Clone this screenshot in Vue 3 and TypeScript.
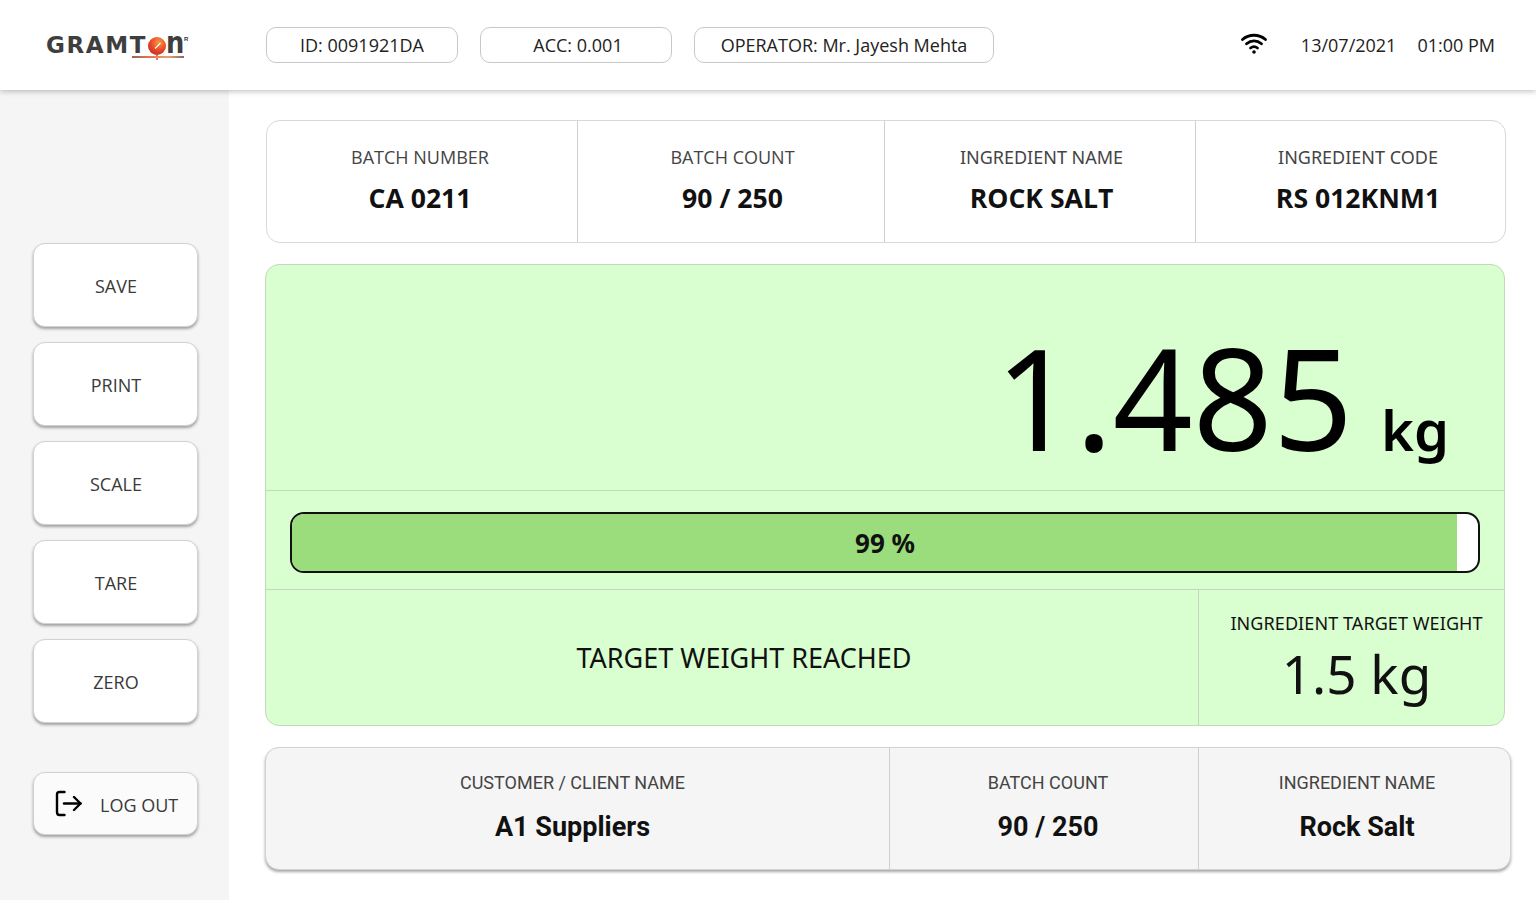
<script setup lang="ts">
const chips: { text: string; cls: string }[] = [
  { text: 'ID: 0091921DA', cls: 'w192' },
  { text: 'ACC: 0.001', cls: 'w192 acc' },
  { text: 'OPERATOR: Mr. Jayesh Mehta', cls: 'w300' },
]
const actions: string[] = ['SAVE', 'PRINT', 'SCALE', 'TARE', 'ZERO']
const topCells: { label: string; value: string; cls: string }[] = [
  { label: 'BATCH NUMBER', value: 'CA 0211', cls: 't1' },
  { label: 'BATCH COUNT', value: '90 / 250', cls: 't2' },
  { label: 'INGREDIENT NAME', value: 'ROCK SALT', cls: 't3' },
  { label: 'INGREDIENT CODE', value: 'RS 012KNM1', cls: 't4' },
]
const bottomCells: { label: string; value: string; cls: string }[] = [
  { label: 'CUSTOMER / CLIENT NAME', value: 'A1 Suppliers', cls: 'b1' },
  { label: 'BATCH COUNT', value: '90 / 250', cls: 'b2' },
  { label: 'INGREDIENT NAME', value: 'Rock Salt', cls: 'b3' },
]
const progress = 98.2
</script>

<template>
  <div class="page">
    <header class="topbar">
      <div class="logo">
        <span class="logo-text">GRAMT</span>
        <svg class="logo-ball" width="18" height="24" viewBox="0 0 18 24">
          <defs>
            <radialGradient id="ball" cx="0.6" cy="0.3" r="0.8">
              <stop offset="0" stop-color="#f79a3e" />
              <stop offset="0.55" stop-color="#e8482a" />
              <stop offset="1" stop-color="#c4261c" />
            </radialGradient>
          </defs>
          <circle cx="9" cy="9" r="9" fill="url(#ball)" />
          <path d="M7 11.5 L12.5 6" stroke="#fff" stroke-width="1.1" />
          <path d="M9 18 V23" stroke="#d9553a" stroke-width="1.6" />
        </svg>
        <span class="logo-n">n</span>
        <span class="logo-r">R</span>
        <span class="logo-line"></span>
      </div>
      <div class="chips">
        <div v-for="c in chips" :key="c.text" class="chip" :class="c.cls">{{ c.text }}</div>
      </div>
      <div class="status">
        <svg class="wifi" width="28" height="22" viewBox="0 0 28 22" fill="none" stroke="#000" stroke-width="2.8" stroke-linecap="round">
          <path d="M2.5 6.5 C9 0.8 19 0.8 25.5 6.5" />
          <path d="M6.5 10.8 C11 7 17 7 21.5 10.8" />
          <path d="M10.5 15 C12.8 13.2 15.2 13.2 17.5 15" />
          <circle cx="14" cy="19" r="1.8" fill="#000" stroke="none" />
        </svg>
        <span class="date">13/07/2021</span>
        <span class="time">01:00 PM</span>
      </div>
    </header>

    <div class="body">
      <aside class="sidebar">
        <div class="actions">
          <button v-for="a in actions" :key="a" class="action" type="button">{{ a }}</button>
        </div>
        <button class="logout" type="button">
          <svg width="27" height="27" viewBox="0 0 27 27" fill="none" stroke="#000" stroke-width="2.4" stroke-linecap="round" stroke-linejoin="round">
            <path d="M9.5 2 H4.5 Q2 2 2 4.5 V22 Q2 25 4.5 25 H9.5" />
            <path d="M9 13.5 H25.5" />
            <path d="M19 7 L25.5 13.5 L19 20" />
          </svg>
          <span>LOG OUT</span>
        </button>
      </aside>

      <main class="main">
        <section class="info">
          <div v-for="c in topCells" :key="c.label" class="info-cell" :class="c.cls">
            <div class="info-label">{{ c.label }}</div>
            <div class="info-value">{{ c.value }}</div>
          </div>
        </section>

        <section class="scale">
          <div class="reading">
            <span class="reading-num">1.485</span>
            <span class="reading-unit">kg</span>
          </div>
          <div class="progress-row">
            <div class="progress">
              <div class="progress-fill" :style="{ width: progress + '%' }"></div>
              <div class="progress-text">99 %</div>
            </div>
          </div>
          <div class="target-row">
            <div class="target-msg">TARGET WEIGHT REACHED</div>
            <div class="target-box">
              <div class="target-label">INGREDIENT TARGET WEIGHT</div>
              <div class="target-value">1.5 kg</div>
            </div>
          </div>
        </section>

        <section class="summary">
          <div v-for="c in bottomCells" :key="c.cls" class="sum-cell" :class="c.cls">
            <div class="sum-label">{{ c.label }}</div>
            <div class="sum-value">{{ c.value }}</div>
          </div>
        </section>
      </main>
    </div>
  </div>
</template>

<style>
html, body { margin: 0; background: #fff; }
</style>

<style scoped>
.page {
  width: 1536px;
  height: 900px;
  display: flex;
  flex-direction: column;
  overflow: hidden;
  font-family: "Open Sans", "Noto Sans", sans-serif;
  color: #333;
}
.topbar {
  height: 90px;
  flex: none;
  background: #fff;
  display: flex;
  align-items: center;
  box-shadow: 0 1px 6px rgba(0, 0, 0, 0.28);
  position: relative;
  z-index: 2;
}
.logo {
  width: 266px;
  flex: none;
  padding-left: 46px;
  box-sizing: border-box;
  display: flex;
  align-items: center;
  position: relative;
  height: 40px;
}
.logo-text {
  font-family: "DejaVu Sans", sans-serif;
  font-weight: 700;
  font-size: 23px;
  letter-spacing: 1.6px;
  color: #3e3e3e;
  line-height: 1;
  width: 102px;
  white-space: nowrap;
}
.logo-ball { margin-top: 7px; flex: none; }
.logo-n {
  font-family: "DejaVu Sans", sans-serif;
  font-weight: 700;
  font-size: 23px;
  color: #3e3e3e;
  line-height: 1;
  display: inline-block;
  transform: scale(1.12, 1.32);
  transform-origin: 0 75%;
  margin-top: -2px;
}
.logo-r {
  position: absolute;
  left: 184px;
  top: 11px;
  font-size: 6px;
  line-height: 7px;
  font-weight: 700;
  font-family: "Liberation Sans", sans-serif;
  color: #333;
}
.logo-line {
  position: absolute;
  left: 132px;
  top: 31px;
  width: 52px;
  height: 2px;
  background: linear-gradient(90deg, #8a6a60, #e8704a 30%, #e8a070 70%, #8a6a60);
}
.chips { display: flex; gap: 22px; flex: 1; }
.chip {
  height: 36px;
  box-sizing: border-box;
  border: 1px solid #c8c8c8;
  border-radius: 10px;
  display: flex;
  align-items: center;
  justify-content: center;
  font-size: 18px;
  color: #222;
}
.w192 { width: 192px; }
.w300 { width: 300px; }
.acc { padding-left: 4px; }
.status {
  display: flex;
  align-items: center;
  padding-right: 41px;
  font-size: 18px;
  color: #222;
}
.wifi { margin-right: 33px; margin-top: -2px; }
.date { margin-right: 21px; }
.body { flex: 1; display: flex; min-height: 0; }
.sidebar {
  width: 229px;
  flex: none;
  background: #f5f5f5;
  box-sizing: border-box;
  padding: 153px 31px 0 33px;
  display: flex;
  flex-direction: column;
}
.actions { display: flex; flex-direction: column; gap: 15px; }
.action, .logout {
  font-family: inherit;
  font-size: 18px;
  color: #3a3a3a;
  border: 1px solid #d2d2d2;
  border-radius: 12px;
  box-shadow: 0 2px 3px rgba(0, 0, 0, 0.35);
  padding: 0;
}
.action {
  width: 165px;
  height: 84px;
  background: #fff;
  padding: 2px 0 0 1px;
}
.logout {
  margin-top: 49px;
  width: 165px;
  height: 63px;
  background: #fbfbfb;
  display: flex;
  align-items: center;
  padding-left: 21px;
  box-sizing: border-box;
}
.logout span { margin: 2px 0 0 18px; }
.main {
  flex: 1;
  min-width: 0;
  padding: 30px 25px 0 36px;
  display: flex;
  flex-direction: column;
}
.info {
  width: 1240px;
  margin-left: 1px;
  height: 123px;
  box-sizing: border-box;
  border: 1px solid #d8d8d8;
  border-radius: 14px;
  display: flex;
  flex: none;
}
.info-cell {
  box-sizing: border-box;
  text-align: center;
  border-right: 1px solid #cfcfcf;
  padding-top: 24px;
}
.info-cell:last-child { border-right: 0; }
.t1 { width: 311px; padding-right: 4px; }
.t2 { width: 307px; padding-left: 3px; }
.t3 { width: 311px; padding-left: 3px; }
.t4 { flex: 1; padding-left: 15px; }
.info-label { font-size: 18px; line-height: 25px; color: #444; }
.t3 .info-label, .t4 .info-label { font-family: "Noto Sans", sans-serif; }
.info-value {
  font-size: 26.6px;
  font-weight: 700;
  line-height: 36px;
  margin-top: 10px;
  color: #111;
}
.scale {
  margin-top: 21px;
  width: 1240px;
  height: 462px;
  box-sizing: border-box;
  background: #d9fed0;
  border: 1px solid #c4d8bd;
  border-radius: 14px;
  display: flex;
  flex-direction: column;
  flex: none;
  font-family: "Noto Sans", sans-serif;
}
.reading {
  height: 226px;
  box-sizing: border-box;
  border-bottom: 1px solid #c4d8bd;
  display: flex;
  align-items: baseline;
  justify-content: flex-end;
  padding-right: 55px;
  color: #000;
  line-height: 1;
  padding-top: 57px;
}
.reading-num { font-size: 140px; line-height: 150px; }
.reading-unit {
  font-size: 56px;
  font-weight: 600;
  margin-left: 28px;
}
.progress-row {
  height: 99px;
  box-sizing: border-box;
  border-bottom: 1px solid #c4d8bd;
  padding: 21px 24px 0 24px;
}
.progress {
  position: relative;
  height: 61px;
  box-sizing: border-box;
  border: 2px solid #111;
  border-radius: 14px;
  background: #fff;
  overflow: hidden;
}
.progress-fill { height: 100%; background: #9bdc7c; }
.progress-text {
  position: absolute;
  left: 0;
  right: 0;
  top: 0;
  bottom: 0;
  display: flex;
  align-items: center;
  justify-content: center;
  font-size: 26px;
  font-weight: 700;
  color: #111;
}
.target-row { flex: 1; display: flex; min-height: 0; }
.target-msg {
  width: 933px;
  flex: none;
  box-sizing: border-box;
  border-right: 1px solid #c4d8bd;
  text-align: center;
  font-size: 27px;
  line-height: 38px;
  padding: 49px 0 0 24px;
  color: #111;
}
.target-box { flex: 1; min-width: 0; text-align: center; padding: 21px 0 0 10px; color: #111; }
.target-label { font-size: 18px; line-height: 25px; white-space: nowrap; letter-spacing: 0.08px; }
.target-value { font-size: 53px; line-height: 66px; margin-top: 5px; }
.summary {
  margin-top: 21px;
  width: 1246px;
  height: 123px;
  box-sizing: border-box;
  background: #f5f5f5;
  border: 1px solid #d2d2d2;
  border-radius: 14px;
  box-shadow: 0 2px 3px rgba(0, 0, 0, 0.35);
  display: flex;
  flex: none;
}
.sum-cell {
  box-sizing: border-box;
  text-align: center;
  border-right: 1px solid #cfcfcf;
  padding-top: 22px;
}
.sum-cell:last-child { border-right: 0; }
.b1 { width: 624px; padding-right: 10px; }
.b2 { width: 309px; padding-left: 8px; }
.b3 { flex: 1; padding-left: 5px; }
.sum-label {
  font-family: Roboto, sans-serif;
  font-size: 18px;
  line-height: 25px;
  color: #444;
}
.sum-value {
  font-family: Roboto, sans-serif;
  font-size: 27px;
  font-weight: 700;
  line-height: 34px;
  margin-top: 15px;
  color: #111;
}
</style>
